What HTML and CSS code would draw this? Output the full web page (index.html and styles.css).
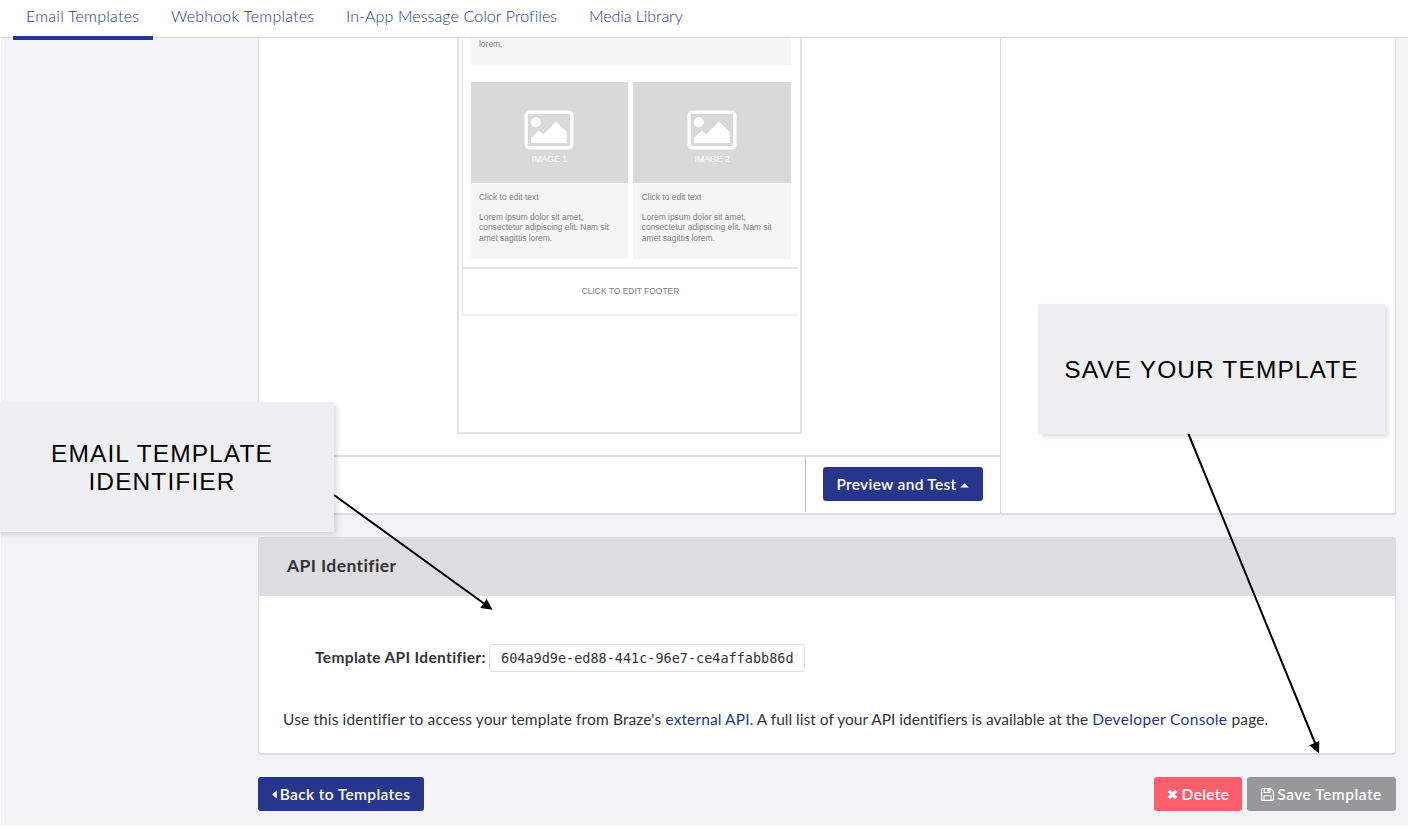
FILE: index.html
```html
<!DOCTYPE html>
<html lang="en">
<head>
<meta charset="utf-8">
<title>Email Templates</title>
<link rel="stylesheet" href="styles.css">
</head>
<body>
<div class="page">
  <nav class="tabs">
    <a class="tab tab-email active"><span>Email Templates</span></a>
    <a class="tab tab-webhook"><span>Webhook Templates</span></a>
    <a class="tab tab-colors"><span>In-App Message Color Profiles</span></a>
    <a class="tab tab-media"><span>Media Library</span></a>
  </nav>
  <main class="content">
    <section class="editor">
      <div class="stage">
        <div class="canvas">
          <div class="device">
            <div class="email">
              <div class="email-body">
                <div class="text-block">lorem.</div>
                <div class="cards">
                  <article class="card">
                    <div class="picture">
                      <svg width="50" height="40" viewBox="0 0 50 40"><rect x="2.2" y="2.2" width="45.6" height="35.6" rx="3" fill="none" stroke="#fff" stroke-width="3.4"/><circle cx="11.8" cy="12.3" r="5" fill="#fff"/><path d="M7 33v-5l7.8-7.5 4.5 3.8L32 11.500l10.7 10.500V33z" fill="#fff"/></svg>
                      <span>IMAGE 1</span>
                    </div>
                    <div class="copy"><p>Click to edit text</p><p>Lorem ipsum dolor sit amet,<br>consectetur adipiscing elit. Nam sit<br>amet sagittis lorem.</p></div>
                  </article>
                  <article class="card">
                    <div class="picture">
                      <svg width="50" height="40" viewBox="0 0 50 40"><rect x="2.2" y="2.2" width="45.6" height="35.6" rx="3" fill="none" stroke="#fff" stroke-width="3.4"/><circle cx="11.8" cy="12.3" r="5" fill="#fff"/><path d="M7 33v-5l7.8-7.5 4.5 3.8L32 11.500l10.7 10.500V33z" fill="#fff"/></svg>
                      <span>IMAGE 2</span>
                    </div>
                    <div class="copy"><p>Click to edit text</p><p>Lorem ipsum dolor sit amet,<br>consectetur adipiscing elit. Nam sit<br>amet sagittis lorem.</p></div>
                  </article>
                </div>
              </div>
              <div class="email-footer">CLICK TO EDIT FOOTER</div>
            </div>
          </div>
        </div>
        <div class="toolbar">
          <div class="toolbar-end">
            <button class="btn btn-preview"><span>Preview and Test</span><svg width="9" height="5" viewBox="0 0 9 5"><path d="M.3 4.500L4.500.3l4.200 4.200z" fill="#fff"/></svg></button>
          </div>
        </div>
      </div>
      <aside class="side"></aside>
    </section>

    <section class="panel">
      <h2 class="panel-head"><span>API Identifier</span></h2>
      <div class="panel-body">
        <div class="field"><label class="label">Template API Identifier:</label><code class="code">604a9d9e-ed88-441c-96e7-ce4affabb86d</code></div>
        <p class="help">Use this identifier to access your template from Braze's <a>external API</a><span class="listing">. A full list of your API identifiers is available at the </span><a class="console">Developer Console</a> page.</p>
      </div>
    </section>

    <div class="actions">
      <button class="btn btn-back"><svg width="5" height="9" viewBox="0 0 5 9"><path d="M4.900.2v8.600L.2 4.500z" fill="#fff"/></svg><span>Back to Templates</span></button>
      <div class="actions-end">
        <button class="btn btn-delete"><svg width="11" height="11" viewBox="0 0 11 11"><path d="M1.800 1.800l7.400 7.400M9.200 1.800L1.800 9.200" stroke="#fff" stroke-width="3.300"/></svg><span>Delete</span></button>
        <button class="btn btn-save"><svg width="13" height="13" viewBox="0 0 13 13" fill="none" stroke="#fff" stroke-width="1.100"><path d="M.6 1.200q0-.6.6-.6h8.300l2.900 2.900v8.300q0 .6-.6.6H1.200q-.6 0-.6-.6z"/><path d="M3.200.6v3.900h5.600V.6M3 12.400V7.700h7v4.700"/><path d="M7.200 1v2.600" stroke-width="1.800"/></svg><span>Save Template</span></button>
      </div>
    </div>
  </main>

  <svg class="arrows" width="1408" height="828" viewBox="0 0 1408 828">
    <path d="M334 495L485 604.300M1188.500 434L1315 743" stroke="#000" stroke-width="2" fill="none"/>
    <path d="M492.500 609.800l-12.200-1.900 6.400-9zM1319 753.500l-9.700-8.300 10-4.300z"/>
  </svg>
  <div class="callout callout-id"><span>EMAIL TEMPLATE</span><span>IDENTIFIER</span></div>
  <div class="callout callout-save"><span>SAVE YOUR TEMPLATE</span></div>
</div>
</body>
</html>
```
FILE: styles.css
```css
* { box-sizing: border-box; }
body { margin: 0; background: #fff; font-family: Lato, "Liberation Sans", sans-serif; color: #333335; font-variant-ligatures: none; }
p, h2 { margin: 0; }
.page { position: relative; width: 1408px; height: 828px; overflow: hidden; display: flex; flex-direction: column; }

.tabs { height: 38px; flex: none; display: flex; padding-left: 13px; gap: 5px; border-bottom: 1px solid #d9d9de; background: #fff; }
.tab { height: 39px; padding: 6px 13px 0; font-size: 16px; font-weight: 300; line-height: 20px; color: #27368c; white-space: nowrap; }
.tab-email { width: 140px; letter-spacing: .24px; }
.tab-webhook { width: 170px; letter-spacing: .2px; }
.tab-colors { width: 238px; letter-spacing: .1px; }
.tab-media { letter-spacing: -.06px; }
.tab.active { border-bottom: 4px solid #27368c; height: 40px; position: relative; }

.content { margin-left: 1px; height: 787px; flex: none; background: #f3f3f6; padding: 0 12px 0 257px; }
.editor { height: 477px; display: flex; background: #fff; border: solid #dddde2; border-width: 0 1px 2px; }
.stage { width: 742px; display: flex; flex-direction: column; border-right: 1px solid #d5d5dc; }
.canvas { height: 417px; flex: none; padding-left: 198px; }
.device { width: 345px; height: 396px; border: 2px solid #e3e3e8; border-top: 0; padding-left: 3px; }
.email { width: 336px; border-left: 1px solid #e8e8e8; font: 8.45px/10.5px "Liberation Sans", Arial, sans-serif; color: #808080; }
.email-body { height: 231px; padding: 0 7.5px; border-bottom: 2px solid #e6e6e6; }
.text-block { height: 27px; width: 320.5px; background: #f5f5f5; padding: .5px 8.5px; }
.cards { display: flex; gap: 5px; margin-top: 17px; width: 320.5px; }
.card { flex: 1; height: 177px; background: #f5f5f5; }
.picture { height: 101px; background: #d9d9d9; display: flex; flex-direction: column; align-items: center; padding-top: 28px; color: #fff; font-size: 8.7px; }
.picture svg { display: block; margin-bottom: 4px; }
.copy { padding: 9px 0 0 8.5px; white-space: nowrap; }
.copy p + p { margin-top: 9px; }
.email-footer { height: 47px; border-bottom: 2px solid #f0f0f0; text-align: center; line-height: 45px; }
.toolbar { flex: 1; border-top: 2px solid #dfdfe4; display: flex; justify-content: flex-end; }
.toolbar-end { width: 195px; height: 55px; border-left: 1px solid #b9b9c2; padding: 10px 0 0 17px; }

.btn { height: 34px; border: 0; border-radius: 3px; color: #fff; font: 600 15.5px/34px Lato, sans-serif; padding: 0; display: flex; align-items: center; justify-content: center; white-space: nowrap; background: #27368c; }
.btn-preview { width: 160px; gap: 3px; letter-spacing: .3px; padding-right: 1px; }
.btn-preview svg { margin-top: 2px; }

.panel { margin-top: 22px; height: 218px; border: 1px solid #dadadf; border-bottom-width: 2px; border-radius: 3px; background: #fff; }
.panel-head { height: 58px; background: #dddde1; padding-left: 28px; font-size: 17.5px; font-weight: 700; line-height: 56px; letter-spacing: .4px; }
.panel-body { padding: 48px 24px 0; }
.field { display: flex; align-items: center; padding-left: 32px; height: 28px; }
.label { width: 174px; font-size: 15.5px; font-weight: 700; letter-spacing: .35px; line-height: 20px; margin-top: -2px; white-space: nowrap; }
.code { width: 316px; height: 28px; border: 1px solid #dedee6; border-radius: 3px; padding-left: 11px; font: 13.5px/27px "DejaVu Sans Mono", monospace; white-space: nowrap; }
.help { margin-top: 37px; font-size: 15.5px; letter-spacing: .12px; line-height: 20px; white-space: nowrap; }
.help a { color: #27368c; }
.help .listing { letter-spacing: .01px; }
.help .console { letter-spacing: .35px; }

.actions { display: flex; justify-content: space-between; margin-top: 22px; }
.actions-end { display: flex; gap: 5px; }
.btn-back { width: 166px; gap: 3px; letter-spacing: .37px; }
.btn-delete { width: 88px; gap: 4px; letter-spacing: .35px; background: #ff5e6c; }
.btn-save { width: 149px; gap: 3px; letter-spacing: .5px; background: #98989a; }

.arrows { position: absolute; left: 0; top: 0; }
.callout { position: absolute; display: flex; flex-direction: column; align-items: center; justify-content: center; padding-top: 2px; background: #efeff1; color: #000; font: 24.5px/28px "Liberation Sans", Arial, sans-serif; letter-spacing: 1.1px; white-space: nowrap; box-shadow: 3px 3px 5px rgba(0,0,0,.13); }
.callout-id { left: -10px; top: 402px; width: 344px; height: 130px; }
.callout-save { left: 1038px; top: 304px; width: 347px; height: 130px; }
```
